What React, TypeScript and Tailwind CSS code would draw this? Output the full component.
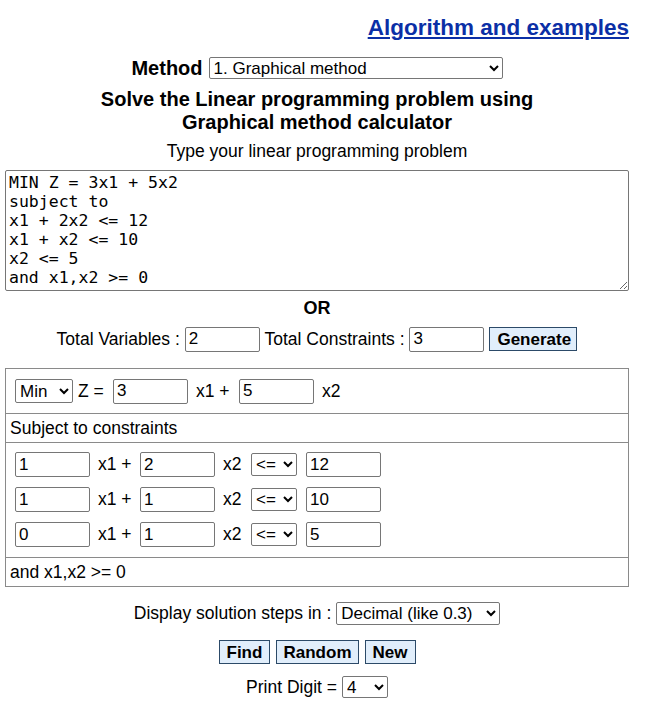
import React from 'react';

const font = "font-['Liberation_Sans',Arial,sans-serif]";
const inputCls =
  'h-[25px] w-[75px] border border-[#767676] rounded-[2px] bg-white px-[3px] text-[17px] text-black outline-none';
const selectCls =
  'border border-[#767676] rounded-[2px] bg-white text-black text-[17px] outline-none';
const btnCls =
  'h-[24px] border border-[#2c4a68] bg-[#e1eefb] px-[7px] text-[17px] font-bold text-black leading-none';

const App: React.FC = () => {
  const constraints = [
    { a: '1', b: '2', rhs: '12' },
    { a: '1', b: '1', rhs: '10' },
    { a: '0', b: '1', rhs: '5' },
  ];

  return (
    <div className={`${font} min-h-screen bg-white pt-[14px] text-black text-[17.5px]`}>
      <div className="flex h-[28px] justify-end pr-[25px]">
        <a href="#" className="text-[22.5px] font-bold leading-[28px] text-[#0b2fa6] underline">
          Algorithm and examples
        </a>
      </div>

      <div className="ml-[5px] w-[624px] flex flex-col items-center">
        <div className="mt-[14px] flex h-[24px] items-center gap-[6px]">
          <span className="text-[20px] font-bold">Method</span>
          <select defaultValue="1" className={`${selectCls} h-[22px] w-[294px]`}>
            <option value="1">1. Graphical method</option>
            <option value="2">2. Simplex method</option>
          </select>
        </div>

        <h1 className="mt-[8px] text-center text-[20px] font-bold leading-[23px]">
          Solve the Linear programming problem using
          <br />
          Graphical method calculator
        </h1>

        <p className="mt-[7px] leading-[20px]">Type your linear programming problem</p>

        <textarea
          className="mt-[9px] h-[121px] w-[624px] border border-[#767676] rounded-[2px] px-[3px] py-[2px] font-['DejaVu_Sans_Mono',monospace] text-[16.5px] leading-[19px] outline-none"
          defaultValue={'MIN Z = 3x1 + 5x2\nsubject to\nx1 + 2x2 <= 12\nx1 + x2 <= 10\nx2 <= 5\nand x1,x2 >= 0'}
        />

        <p className="mt-[7px] text-[18px] font-bold leading-[20px]">OR</p>

        <div className="mt-[9px] flex h-[24px] items-center">
          <span>Total Variables :&nbsp;</span>
          <input className={`${inputCls} h-[24px] w-[74px]`} defaultValue="2" />
          <span>&nbsp;Total Constraints :&nbsp;</span>
          <input className={`${inputCls} h-[24px] w-[74px]`} defaultValue="3" />
          <button className={`${btnCls} ml-[5px] w-[88px]`}>Generate</button>
        </div>

        <div className="mt-[17px] w-[624px] border border-[#8a8a8a]">
          <div className="flex h-[44px] items-center pl-[9px]">
            <select defaultValue="min" className={`${selectCls} h-[24px] w-[58px]`}>
              <option value="min">Min</option>
              <option value="max">Max</option>
            </select>
            <span className="ml-[5px] w-[35px]">Z =</span>
            <input className={inputCls} defaultValue="3" />
            <span className="ml-[8px] w-[43px]">x1 +</span>
            <input className={inputCls} defaultValue="5" />
            <span className="ml-[8px]">x2</span>
          </div>
          <div className="flex h-[29px] items-center border-t border-[#8a8a8a] pl-[4px]">
            Subject to constraints
          </div>
          <div className="flex h-[115px] flex-col gap-[10px] border-t border-[#8a8a8a] pl-[9px] pt-[9px]">
            {constraints.map((c, i) => (
              <div key={i} className="flex h-[25px] items-center">
                <input className={inputCls} defaultValue={c.a} />
                <span className="ml-[8px] w-[42px]">x1 +</span>
                <input className={inputCls} defaultValue={c.b} />
                <span className="ml-[8px] w-[28px]">x2</span>
                <select defaultValue="le" className={`${selectCls} h-[23px] w-[46px]`}>
                  <option value="le">&lt;=</option>
                  <option value="ge">&gt;=</option>
                  <option value="eq">=</option>
                </select>
                <input className={`${inputCls} ml-[9px]`} defaultValue={c.rhs} />
              </div>
            ))}
          </div>
          <div className="flex h-[29px] items-center border-t border-[#8a8a8a] pl-[4px]">
            and x1,x2 &gt;= 0
          </div>
        </div>

        <div className="mt-[15px] flex h-[23px] items-center">
          <span>Display solution steps in :&nbsp;</span>
          <select defaultValue="dec" className={`${selectCls} h-[23px] w-[164px]`}>
            <option value="dec">Decimal (like 0.3)</option>
            <option value="frac">Fraction (like 1/3)</option>
          </select>
        </div>

        <div className="mt-[15px] flex gap-[6px]">
          <button className={`${btnCls} w-[51px]`}>Find</button>
          <button className={`${btnCls} w-[83px]`}>Random</button>
          <button className={`${btnCls} w-[51px]`}>New</button>
        </div>

        <div className="mt-[12px] flex h-[22px] items-center">
          <span>Print Digit =&nbsp;</span>
          <select defaultValue="4" className={`${selectCls} h-[22px] w-[46px]`}>
            <option value="2">2</option>
            <option value="3">3</option>
            <option value="4">4</option>
            <option value="5">5</option>
          </select>
        </div>
      </div>
    </div>
  );
};

export default App;
